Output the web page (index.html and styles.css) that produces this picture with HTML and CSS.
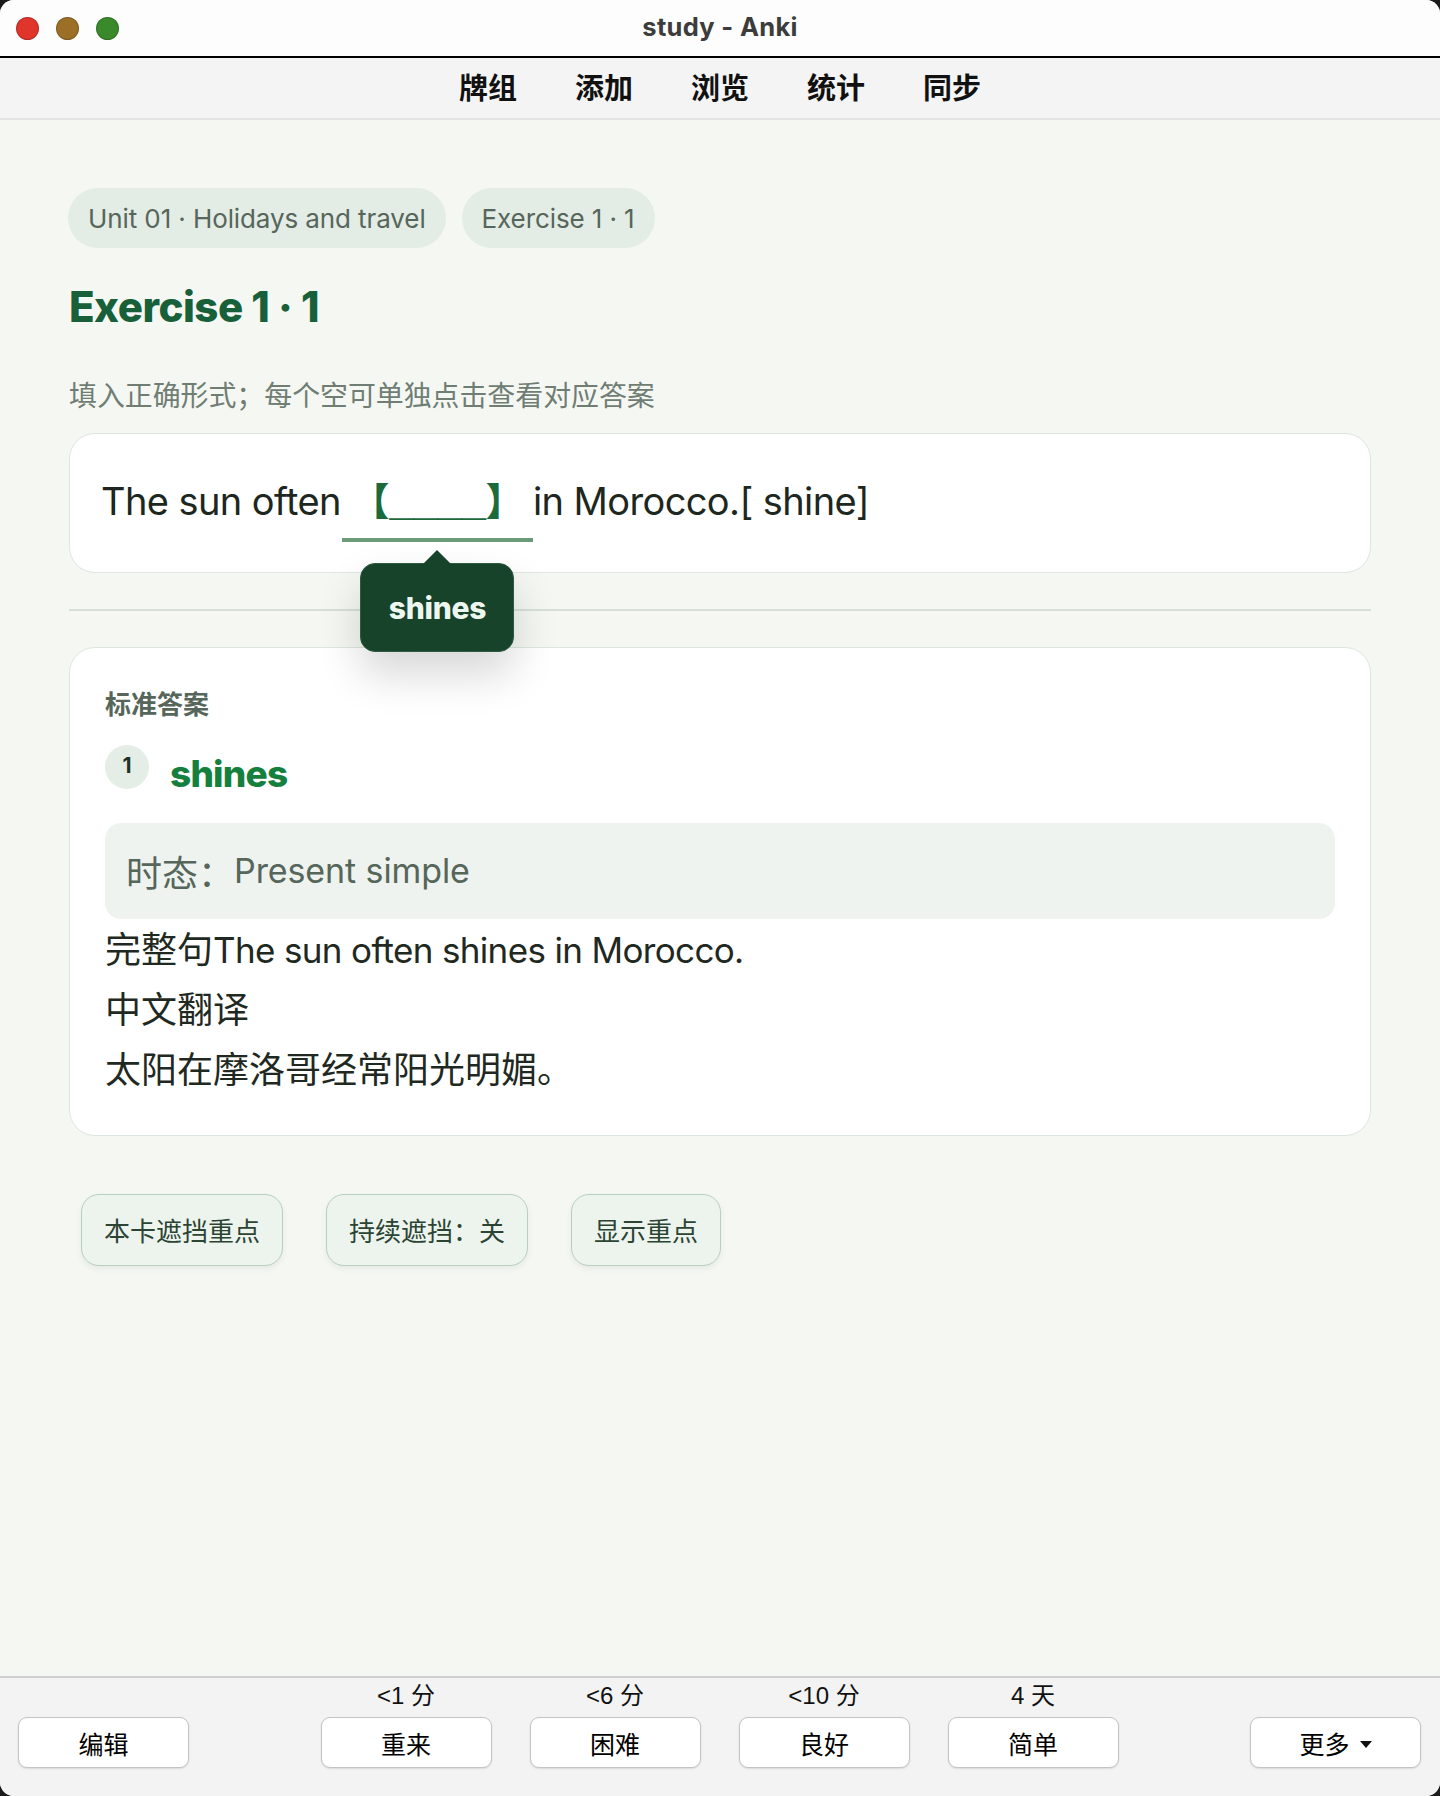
FILE: index.html
```html
<!DOCTYPE html>
<html lang="zh-CN">
<head>
<meta charset="utf-8">
<title>study - Anki</title>
<link rel="stylesheet" href="styles.css">
</head>
<body>
<div class="window">
  <header class="titlebar">
    <div class="lights">
      <span class="light red"></span>
      <span class="light yellow"></span>
      <span class="light green"></span>
    </div>
    <div class="title">study - Anki</div>
    <div class="spacer"></div>
  </header>
  <nav class="toolbar">
    <span class="tool">牌组</span>
    <span class="tool">添加</span>
    <span class="tool">浏览</span>
    <span class="tool">统计</span>
    <span class="tool">同步</span>
  </nav>
  <main class="content">
    <div class="chips">
      <span class="chip">Unit 01 · Holidays and travel</span>
      <span class="chip">Exercise 1 · 1</span>
    </div>
    <h1 class="heading">Exercise 1 · 1</h1>
    <p class="hint">填入正确形式；每个空可单独点击查看对应答案</p>
    <div class="card question">
      <p class="sentence">The sun often<span class="blank"><span class="cloze">【<span class="under">____</span>】</span><span class="tip">shines</span></span>in Morocco.[ shine]</p>
    </div>
    <div class="divider"></div>
    <div class="card answer">
      <div class="answer-label">标准答案</div>
      <div class="answer-row"><span class="num">1</span><span class="word">shines</span></div>
      <div class="tense">时态：<span class="tense-en">Present simple</span></div>
      <div class="line">完整句<span class="en">The sun often shines in Morocco.</span></div>
      <div class="line">中文翻译</div>
      <div class="line">太阳在摩洛哥经常阳光明媚。</div>
    </div>
    <div class="actions">
      <button class="pill">本卡遮挡重点</button>
      <button class="pill">持续遮挡：关</button>
      <button class="pill">显示重点</button>
    </div>
  </main>
  <footer class="bottombar">
    <div class="side"><button class="bbtn">编辑</button></div>
    <div class="answers">
      <div class="ans"><span class="due">&lt;1 分</span><button class="bbtn">重来</button></div>
      <div class="ans"><span class="due">&lt;6 分</span><button class="bbtn">困难</button></div>
      <div class="ans"><span class="due">&lt;10 分</span><button class="bbtn">良好</button></div>
      <div class="ans"><span class="due">4 天</span><button class="bbtn">简单</button></div>
    </div>
    <div class="side right"><button class="bbtn more">更多<span class="caret"></span></button></div>
  </footer>
</div>
</body>
</html>
```

FILE: styles.css
```css
* { box-sizing: border-box; }
html, body { margin: 0; padding: 0; }
body {
  background: #1b1b1b;
  font-family: Inter, "Noto Sans CJK SC", sans-serif;
}
.window {
  width: 1440px;
  height: 1796px;
  border-radius: 14px;
  overflow: hidden;
  background: #f5f7f3;
  display: flex;
  flex-direction: column;
}
.titlebar {
  height: 58px;
  flex: none;
  background: #fdfdfd;
  border-bottom: 2px solid #000;
  display: grid;
  grid-template-columns: 1fr auto 1fr;
  align-items: center;
}
.lights {
  display: flex;
  gap: 17px;
  padding-left: 16px;
  padding-top: 1px;
}
.light {
  width: 23px;
  height: 23px;
  border-radius: 50%;
  border: 1px solid rgba(0,0,0,0.18);
}
.light.red { background: #e0352b; }
.light.yellow { background: #9b6f26; }
.light.green { background: #3a8a2b; }
.title {
  font-family: Inter, "Noto Sans CJK SC", sans-serif;
  font-weight: 700;
  font-size: 25.5px;
  color: #3c3c3c;
  letter-spacing: 0.3px;
  padding-bottom: 4px;
}
.toolbar {
  height: 62px;
  flex: none;
  background: #f4f4f4;
  border-bottom: 2px solid #e3e3e3;
  display: flex;
  justify-content: center;
  align-items: center;
  gap: 58px;
  padding-bottom: 4px;
}
.tool {
  font-family: "Noto Sans CJK SC", sans-serif;
  font-weight: 700;
  font-size: 29px;
  color: #111;
  line-height: 1;
}
.content {
  flex: 1;
  padding: 68px 69px 0 69px;
}
.chips {
  display: flex;
  gap: 16px;
  margin-left: -1px;
}
.chip {
  height: 60px;
  border-radius: 30px;
  background: #e3ece5;
  color: #56665a;
  font-size: 26px;
  padding: 0 20px;
  display: flex;
  align-items: center;
  letter-spacing: -0.1px;
}
.heading {
  margin: 33px 0 0 0;
  font-size: 42px;
  line-height: 52px;
  font-weight: 800;
  letter-spacing: -0.5px;
  color: #17603a;
}
.hint {
  margin: 41px 0 0 0;
  font-family: "Noto Sans CJK SC", sans-serif;
  font-size: 27.9px;
  line-height: 40px;
  color: #707d73;
}
.card {
  background: #fff;
  border: 1.5px solid #dde6df;
  border-radius: 26px;
}
.question {
  margin-top: 19px;
  padding: 39px 31px 30px 31px;
}
.sentence {
  margin: 0;
  font-size: 38px;
  line-height: 57px;
  color: #1d2720;
  letter-spacing: -0.6px;
}
.blank {
  display: inline-block;
  position: relative;
  width: 191px;
  margin: 0 0 0 1px;
  padding-bottom: 8px;
  border-bottom: 4px solid #6b9b78;
  text-align: center;
}
.cloze {
  font-family: "Noto Sans CJK SC", sans-serif;
  font-weight: 900;
  color: #1b6a3c;
  letter-spacing: 0;
  line-height: 1;
}
.under {
  font-family: "Liberation Sans", sans-serif;
  font-weight: 700;
  font-size: 44px;
  letter-spacing: -0.5px;
  line-height: 1;
}
.tip {
  position: absolute;
  left: 50%;
  top: calc(100% + 25px);
  transform: translateX(-50%);
  width: 154px;
  height: 89px;
  border-radius: 15px;
  background: #17432b;
  border: 1.5px solid #2d5a41;
  color: #eef7ef;
  font-family: Inter, sans-serif;
  font-size: 30px;
  font-weight: 800;
  letter-spacing: -0.3px;
  line-height: 1;
  display: flex;
  align-items: center;
  justify-content: center;
  box-shadow: 0 22px 44px rgba(0,0,0,0.16);
  z-index: 2;
}
.tip::before {
  content: "";
  position: absolute;
  left: 50%;
  top: -14px;
  margin-left: -14px;
  border-left: 14px solid transparent;
  border-right: 14px solid transparent;
  border-bottom: 14px solid #17432b;
}
.divider {
  margin-top: 36px;
  height: 1.5px;
  background: #d6e0d8;
}
.answer {
  margin-top: 36px;
  padding: 37px 35px 36px 35px;
}
.answer-label {
  font-family: "Noto Sans CJK SC", sans-serif;
  font-weight: 700;
  font-size: 26px;
  line-height: 36px;
  color: #56665a;
}
.answer-row {
  margin-top: 24px;
  display: flex;
  align-items: flex-start;
  gap: 21px;
  height: 44px;
}
.num {
  width: 44px;
  height: 44px;
  border-radius: 50%;
  background: #e4ede6;
  color: #1e3326;
  font-size: 21px;
  font-weight: 700;
  display: flex;
  align-items: center;
  justify-content: center;
  padding-bottom: 3px;
}
.word {
  font-size: 37px;
  font-weight: 800;
  line-height: 38px;
  margin-top: 10px;
  letter-spacing: -0.8px;
  color: #15803d;
}
.tense {
  margin-top: 34px;
  height: 96px;
  border-radius: 16px;
  background: #eef3ef;
  color: #56665a;
  font-family: "Noto Sans CJK SC", sans-serif;
  font-size: 36px;
  padding: 0 21px;
  display: flex;
  align-items: center;
}
.tense-en {
  font-family: Inter, sans-serif;
  font-size: 34px;
  letter-spacing: -0.1px;
}
.line {
  font-family: "Noto Sans CJK SC", sans-serif;
  font-size: 36px;
  line-height: 56px;
  height: 60px;
  color: #1f2922;
}
.en {
  font-family: Inter, sans-serif;
  font-size: 35px;
  letter-spacing: -0.65px;
  line-height: 1;
}
.actions {
  margin: 58px 0 0 12px;
  display: flex;
  gap: 43px;
}
.pill {
  height: 72px;
  padding: 0 22px;
  border-radius: 18px;
  border: 1.5px solid #b8cfbe;
  background: #edf4ee;
  color: #2c4433;
  font-family: "Noto Sans CJK SC", sans-serif;
  font-size: 26px;
  box-shadow: 0 3px 6px rgba(0,0,0,0.06);
}
.bottombar {
  flex: none;
  height: 120px;
  background: #f3f3f3;
  border-top: 2px solid #cfcfcf;
  display: flex;
  justify-content: space-between;
  align-items: flex-end;
  padding: 0 19px 28px 18px;
  font-family: "Liberation Sans", "Noto Sans CJK SC", sans-serif;
}
.side { width: 171px; display: flex; }
.answers {
  display: flex;
  gap: 38px;
}
.ans {
  display: flex;
  flex-direction: column;
  align-items: center;
  gap: 7px;
}
.due {
  font-size: 24px;
  line-height: 28px;
  color: #111;
}
.bbtn {
  width: 171px;
  height: 51px;
  border-radius: 9px;
  border: 1.5px solid #c4c4c4;
  background: #fff;
  box-shadow: 0 1px 2px rgba(0,0,0,0.1);
  font-family: "Liberation Sans", "Noto Sans CJK SC", sans-serif;
  font-size: 25px;
  color: #000;
  display: flex;
  align-items: center;
  justify-content: center;
  padding: 0;
}
.more { gap: 10px; }
.caret {
  width: 0;
  height: 0;
  border-left: 6px solid transparent;
  border-right: 6px solid transparent;
  border-top: 7px solid #111;
  margin-top: 3px;
}
```
